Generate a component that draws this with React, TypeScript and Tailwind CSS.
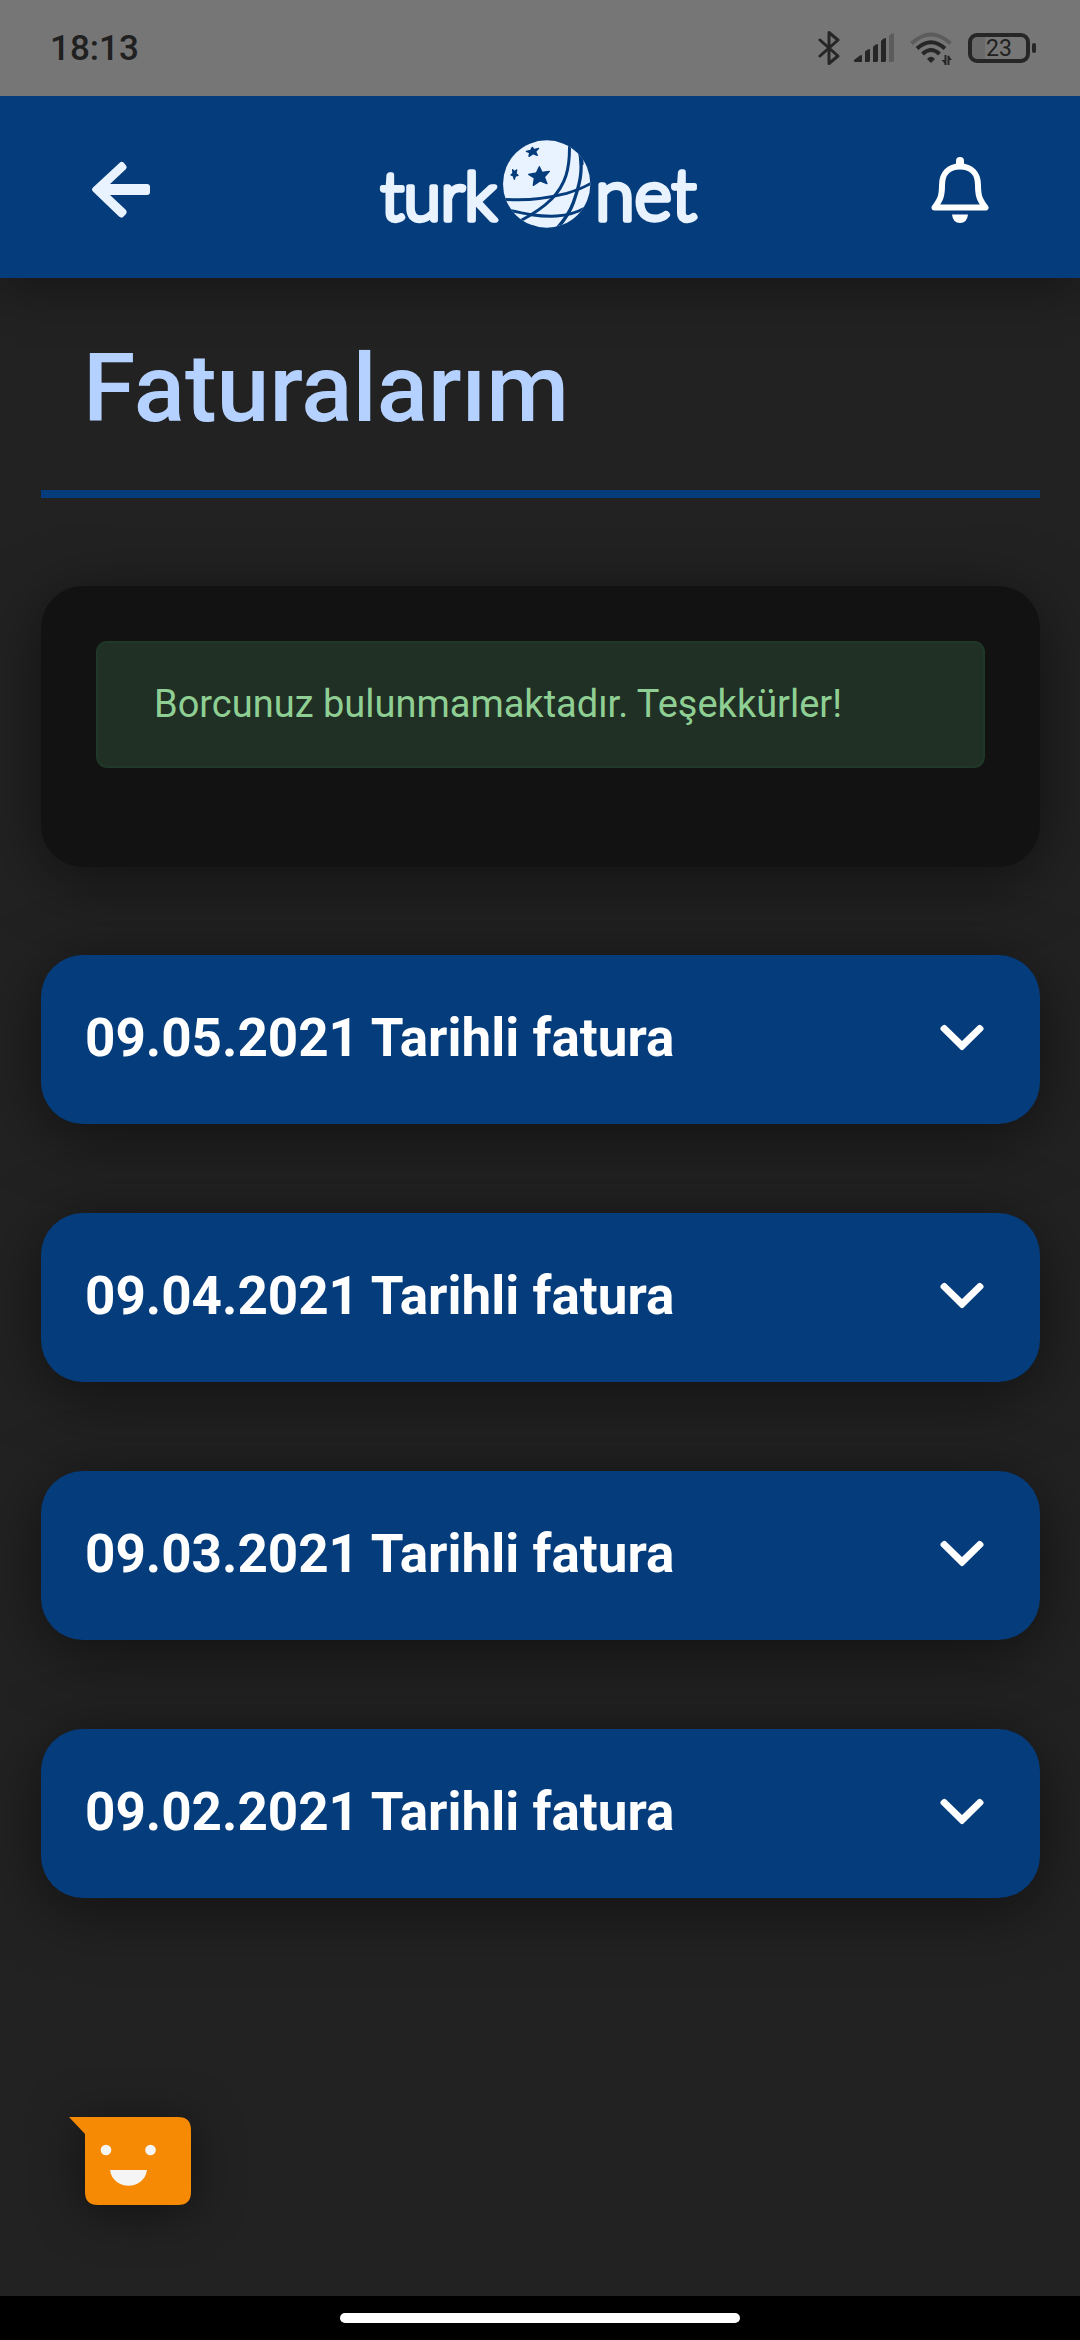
import React from 'react';

const invoices = [
    { date: '09.05.2021' },
    { date: '09.04.2021' },
    { date: '09.03.2021' },
    { date: '09.02.2021' },
];

const StatusBar: React.FC = () => {
    return (
        <div className="relative z-10 flex h-24 items-center justify-between bg-[#767676] pl-[50px] pr-11 text-[#202020]">
            <span className="pt-0.5 text-[35px] leading-[42px] font-medium">18:13</span>
            <div className="flex items-center">
                {/* Bluetooth */}
                <svg className="mr-[14px] h-9 w-[22px]" viewBox="0 0 22 36" fill="none" stroke="#262626" strokeWidth="3" strokeLinecap="round" strokeLinejoin="round">
                    <path d="M2 10 L20 26 L11 33.500 V2.500 L20 10 L2 26" />
                </svg>
                {/* Signal */}
                <svg className="mr-4 h-9 w-10" viewBox="0 0 40 36" fill="#262626">
                    <path d="M0 31.500 V30 L6 25.500 Q8 24.500 8 26 V32 H1 Z" />
                    <path d="M11 32 V21.500 Q13 19 16 19 V31 L15 32 Z" />
                    <path d="M19 32 V17 Q21 14 24 14 V31 L23 32 Z" />
                    <path d="M27 32 V11 Q29 8 32 8 V31 L31 32 Z" />
                    <path d="M35 32 V6 Q37 3 40 3 V31 L39 32 Z" fill="#5c5c5c" />
                </svg>
                {/* Wi-Fi */}
                <svg className="mr-4 h-9 w-[42px]" viewBox="0 0 42 36" fill="none" strokeWidth="4">
                    <path d="M1.500 13.500 Q21 -4.500 40.500 13.500" stroke="#5c5c5c" />
                    <path d="M7 18.500 Q21 6 35 18.500" stroke="#262626" />
                    <path d="M12.500 24 Q21 16 29.500 24" stroke="#262626" />
                    <path d="M17 29 Q21 24.500 25 29 L21 33 Z" fill="#262626" stroke="none" />
                    <path d="M35.500 25 V35 M38.500 26 V35" stroke="#262626" strokeWidth="2" />
                    <path d="M31.500 30 H36 V35 Z M38 25 L42 30 H38 Z" fill="#262626" stroke="none" />
                </svg>
                {/* Battery */}
                <div className="flex items-center gap-0.5">
                    <div className="flex h-[30px] w-[62px] items-center justify-center rounded-[9px] border-4 border-[#262626] bg-linear-to-r from-[#6a6a6a] from-25% to-[#767676] to-25% pt-0.5 text-[23px] leading-[22px]">
                        23
                    </div>
                    <div className="h-[10px] w-1 rounded-full bg-[#262626]"></div>
                </div>
            </div>
        </div>
    );
};

const Logo: React.FC = () => {
    return (
        <svg className="mb-1 h-[150px] w-[360px]" viewBox="0 0 1080 450" role="img" aria-label="turk net">
            <g
                fill="#e8f3ff"
                stroke="#e8f3ff"
                strokeWidth="16"
                strokeLinejoin="round"
                fontFamily="Lato, sans-serif"
                fontWeight="300"
            >
                <text x="62" y="331" fontSize="202">turk</text>
                <text x="706" y="331" fontSize="214">net</text>
            </g>
            <clipPath id="globe">
                <circle cx="560" cy="222" r="131" />
            </clipPath>
            <circle cx="560" cy="222" r="131" fill="#e8f3ff" />
            <g clipPath="url(#globe)" fill="none" stroke="#053c7c" strokeWidth="9">
                <path d="M628 90 C632 180 615 225 575 267 C550 292 520 312 480 333" />
                <path d="M655 110 C675 180 655 235 640 278 C628 312 610 335 585 362" strokeWidth="10" />
                <path d="M666 120 V165" />
                <path d="M425 267 C500 275 560 265 620 250 C655 240 680 228 700 216" />
                <path d="M425 296 C480 308 530 321 590 318 C620 316 650 308 675 294" />
                <path d="M432 270 L445 310" strokeWidth="5" />
            </g>
            <g fill="#053c7c" stroke="#053c7c" strokeWidth="4" strokeLinejoin="round">
                <path d="M538 170 L546 187 L568 184 L553 201 L561 221 L540 213 L520 226 L523 204 L506 193 L529 189 Z" />
                <path d="M517 112 L522 119 L536 115 L527 125 L532 136 L519 131 L507 139 L509 128 L499 124 L512 121 Z" />
                <path d="M458 179 L463 185 L470 180 L468 191 L474 196 L466 198 L463 208 L460 198 L453 195 L459 190 Z" />
            </g>
        </svg>
    );
};

const Header: React.FC = () => {
    return (
        <header className="grid h-[182px] grid-cols-[1fr_auto_1fr] items-center bg-[#053c7c] px-[91px] shadow-[0_8px_50px_rgba(0,0,0,0.4)]">
            <button type="button" aria-label="Geri" className="mt-1.5 justify-self-start">
                <svg className="h-[60px] w-[60px]" viewBox="0 0 60 60">
                    <path d="M29 2.500 Q31 1 33 3 L35 5.500 Q36.500 7 35 9 L19 24 H56 Q59 24 59 27 V32 Q59 35 56 35 H19 L35 50 Q36.500 52 35 54 L32 57 Q30.500 58.500 28 56.500 L2 31.500 Q0 29.500 2 27.500 Z" fill="#e8f3ff" />
                </svg>
            </button>
            <Logo />
            <button type="button" aria-label="Bildirimler" className="mt-1.5 justify-self-end">
                <svg className="h-[66px] w-[58px]" viewBox="0 0 58 66" fill="#fff">
                    <path d="M25 9 V4 Q25 0 29 0 Q33 0 33 4 V9 Z" />
                    <path d="M3.500 50.500 C10 42 11 38 11 28 C11 16 18 9.500 29 9.500 C40 9.500 47 16 47 28 C47 38 48 42 54.500 50.500 Z" fill="none" stroke="#fff" strokeWidth="6" strokeLinejoin="round" />
                    <path d="M21 57.500 H37 Q36 66 29 66 Q22 66 21 57.500 Z" />
                </svg>
            </button>
        </header>
    );
};

const App: React.FC = () => {
    return (
        <div className="flex min-h-screen flex-col bg-[#222222] font-[Roboto,sans-serif]">
            <StatusBar />
            <Header />
            <main className="flex grow flex-col pl-[41px] pr-10">
                <h1 className="border-b-8 border-[#053c7c] pt-[55px] pb-[45px] pl-[42px] text-[95px] leading-[112px] font-medium text-[#b5d1ff]">
                    Faturalarım
                </h1>

                <section className="mt-[88px] rounded-[42px] bg-[#121212] px-[55px] pt-[55px] pb-[99px] shadow-[0_12px_64px_rgba(0,0,0,0.5)]">
                    <p className="rounded-[11px] border-2 border-[#1f3827] bg-[#203025] px-14 py-[39px] text-[38px] leading-[45px] text-[#8fcf94]">
                        Borcunuz bulunmamaktadır. Teşekkürler!
                    </p>
                </section>

                <ul className="mt-[88px] flex flex-col gap-[89px]">
                    {invoices.map((invoice) => (
                        <li key={invoice.date}>
                            <button
                                type="button"
                                className="flex h-[169px] w-full items-center justify-between rounded-[42px] bg-[#053c7c] pb-1 pl-11 pr-14 text-[53px] leading-[64px] font-bold text-white shadow-[0_12px_64px_rgba(0,0,0,0.5)]"
                            >
                                {invoice.date} Tarihli fatura
                                <svg className="h-[27px] w-11" viewBox="0 0 44 27" fill="#fff">
                                    <path d="M1.500 2.500 L3 1.200 Q4.500 0 6 1.500 L22 17 L38 1.500 Q39.500 0 41 1.200 L42.500 2.500 Q44.500 4.500 43 6.200 L23.500 25.500 Q22 27 20.500 25.500 L1 6.200 Q-0.500 4.500 1.500 2.500 Z" />
                                </svg>
                            </button>
                        </li>
                    ))}
                </ul>

                <button type="button" aria-label="Sohbet" className="mt-auto mb-[91px] ml-7 self-start">
                    <svg className="h-[88px] w-[122px] overflow-visible drop-shadow-[0_6px_24px_rgba(0,0,0,0.5)]" viewBox="0 0 122 88">
                        <path d="M0 0 H109 Q122 0 122 13 V75 Q122 88 109 88 H29 Q16 88 16 75 V17 Z" fill="#f68a04" />
                        <circle cx="37" cy="33" r="5.300" fill="#f5f5f5" />
                        <circle cx="81.500" cy="33" r="5.300" fill="#f5f5f5" />
                        <path d="M41 53 H78 C75 74 44 74 41 53 Z" fill="#f5f5f5" />
                    </svg>
                </button>
            </main>
            <footer className="flex h-11 items-center justify-center bg-black">
                <div className="h-[10px] w-[37%] rounded-full bg-white"></div>
            </footer>
        </div>
    );
};

export default App;
